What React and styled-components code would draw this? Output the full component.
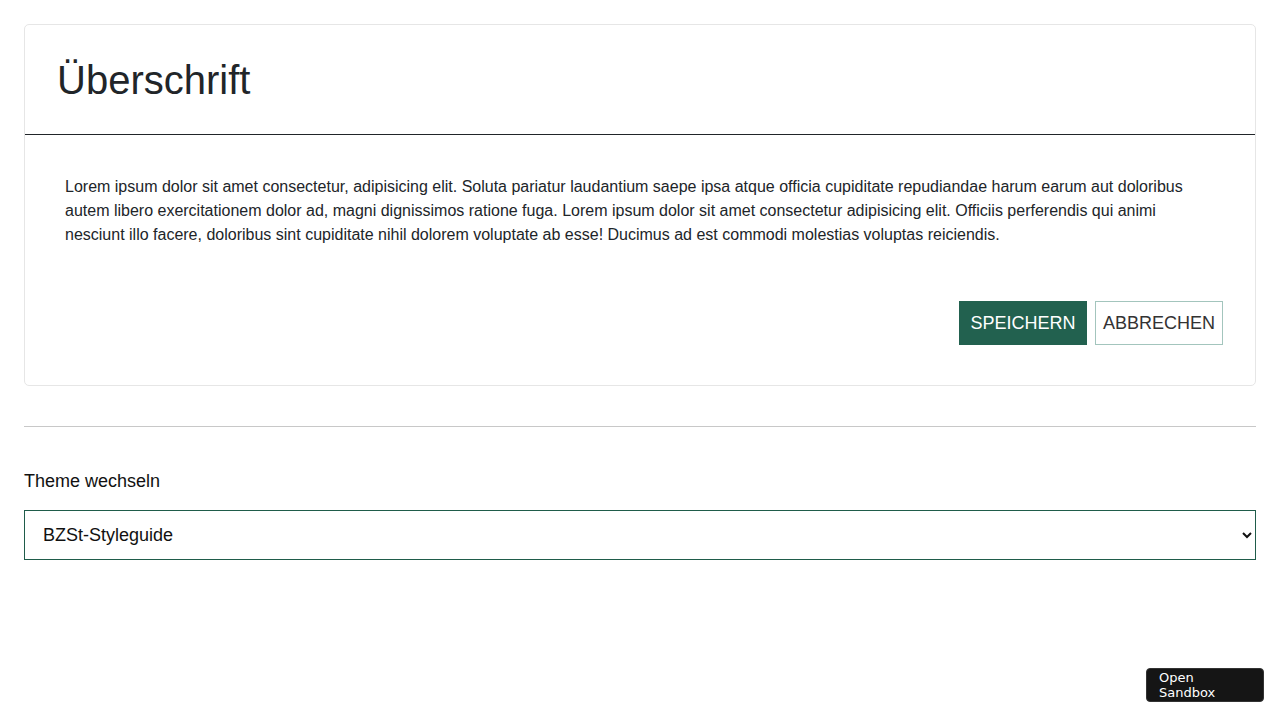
import React from 'react';
import styled, { createGlobalStyle } from 'styled-components';

const Global = createGlobalStyle`
    body {
        margin: 0;
        font-family: "Liberation Sans", Arial, sans-serif;
        color: #212529;
        background: #fff;
    }
`;

const Page = styled.div`
    padding: 24px;
`;

const Card = styled.div`
    border: 1px solid #e6e6e6;
    border-radius: 5px;
`;

const CardHeader = styled.div`
    padding: 31px 32px 30px 32px;
    border-bottom: 1px solid #212529;
`;

const Heading = styled.h1`
    margin: 0;
    font-size: 40px;
    font-weight: 400;
    line-height: 48px;
    color: #212529;
`;

const CardBody = styled.div`
    padding: 40px 40px 0 40px;
`;

const Text = styled.p`
    margin: 0;
    font-size: 16px;
    line-height: 24px;
`;

const Footer = styled.div`
    display: flex;
    justify-content: flex-end;
    gap: 8px;
    padding: 54px 32px 40px 32px;
`;

const Button = styled.button`
    width: 128px;
    height: 44px;
    padding: 0;
    font-family: "Liberation Sans", Arial, sans-serif;
    font-size: 18px;
    text-transform: uppercase;
    border: 1px solid ${p => p.primary ? '#22614f' : '#a3c5bd'};
    background: ${p => p.primary ? '#22614f' : '#fff'};
    color: ${p => p.primary ? '#fff' : '#333'};
    border-radius: 0;
    cursor: pointer;
`;

const Rule = styled.hr`
    margin: 40px 0 0 0;
    border: 0;
    border-top: 1px solid #c8c8c8;
`;

const Label = styled.label`
    display: block;
    margin-top: 43px;
    font-size: 18px;
    line-height: 22px;
    color: #111;
`;

const Select = styled.select`
    display: block;
    width: 100%;
    height: 50px;
    margin-top: 18px;
    padding: 0 14px;
    font-family: "Liberation Sans", Arial, sans-serif;
    font-size: 18px;
    color: #111;
    background: #fff;
    border: 1px solid #1f5c4a;
    border-radius: 0;
`;

const SandboxButton = styled.button`
    position: fixed;
    right: 16px;
    bottom: 18px;
    width: 118px;
    height: 34px;
    padding: 0 12px;
    text-align: left;
    font-family: "DejaVu Sans", sans-serif;
    font-size: 13px;
    line-height: 15px;
    color: #fff;
    background: #151515;
    border: 1px solid #333;
    border-radius: 4px;
`;

export default function App() {
    return (
        <Page>
            <Global />
            <Card>
                <CardHeader>
                    <Heading>Überschrift</Heading>
                </CardHeader>
                <CardBody>
                    <Text>
                        Lorem ipsum dolor sit amet consectetur, adipisicing elit. Soluta pariatur laudantium saepe ipsa atque officia cupiditate repudiandae harum earum aut doloribus autem libero exercitationem dolor ad, magni dignissimos ratione fuga. Lorem ipsum dolor sit amet consectetur adipisicing elit. Officiis perferendis qui animi nesciunt illo facere, doloribus sint cupiditate nihil dolorem voluptate ab esse! Ducimus ad est commodi molestias voluptas reiciendis.
                    </Text>
                </CardBody>
                <Footer>
                    <Button primary>Speichern</Button>
                    <Button>Abbrechen</Button>
                </Footer>
            </Card>
            <Rule />
            <Label htmlFor="theme">Theme wechseln</Label>
            <Select id="theme" defaultValue="bzst">
                <option value="bzst">BZSt-Styleguide</option>
                <option value="default">Standard</option>
            </Select>
            <SandboxButton>Open Sandbox</SandboxButton>
        </Page>
    );
}
